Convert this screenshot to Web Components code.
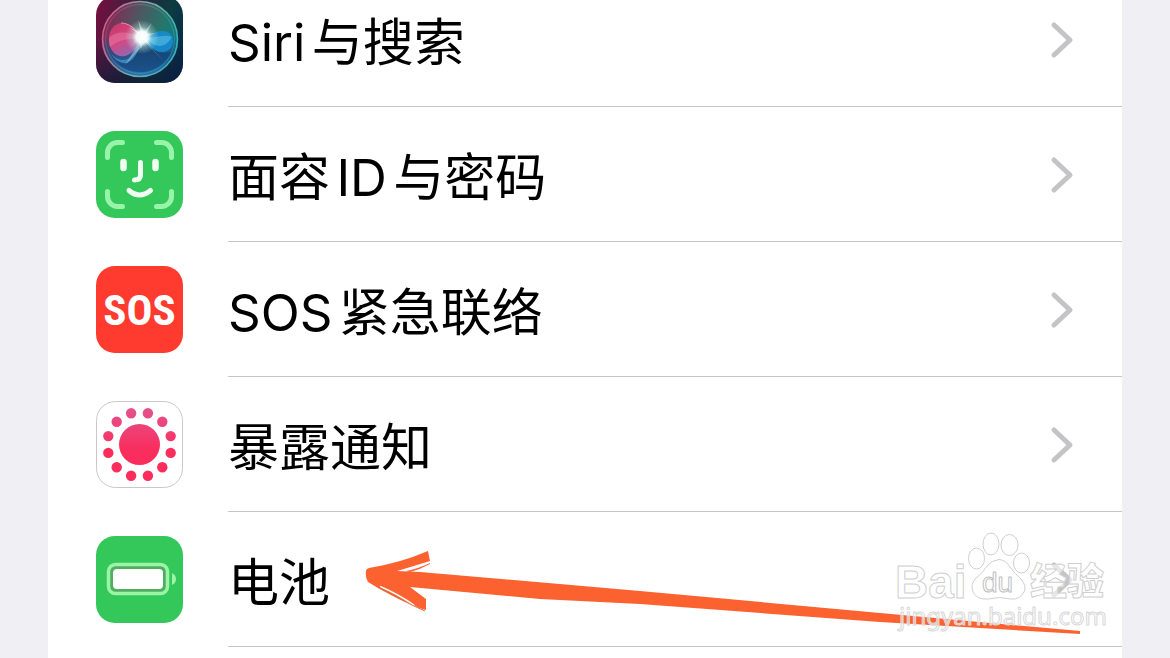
<!DOCTYPE html>
<html lang="zh-CN">
<head>
<meta charset="utf-8">
<meta name="viewport" content="width=device-width, initial-scale=1">
<title>设置</title>
<style>
  html, body {
    height: 100%;
    margin: 0;
  }

  body {
    overflow: hidden;
    background: #efeff4;
    color: #000;
    font-family: Inter, "Noto Sans CJK SC", sans-serif;
  }
</style>
</head>
<body>
<settings-list>
  <settings-row href="#siri">
    <app-icon slot="icon" name="siri"></app-icon>
    Siri与搜索
  </settings-row>
  <settings-row href="#faceid">
    <app-icon slot="icon" name="faceid"></app-icon>
    面容ID与密码
  </settings-row>
  <settings-row href="#sos">
    <app-icon slot="icon" name="sos"></app-icon>
    SOS紧急联络
  </settings-row>
  <settings-row href="#exposure">
    <app-icon slot="icon" name="exposure"></app-icon>
    暴露通知
  </settings-row>
  <settings-row href="#battery">
    <app-icon slot="icon" name="battery"></app-icon>
    电池
    <pointer-arrow slot="overlay"></pointer-arrow>
    <site-watermark slot="overlay"></site-watermark>
  </settings-row>
</settings-list>

<script>
function makeTemplate(html) {
  const template = document.createElement('template');
  template.innerHTML = html;
  return template;
}

const listTemplate = makeTemplate(`
  <style>
    :host {
      display: block;
      box-sizing: border-box;
      height: 100%;
      padding: 0 48px;
      overflow: hidden;
    }

    /* the list is scrolled a little way into its first row */
    .card {
      display: flex;
      flex-direction: column;
      min-height: 100%;
      margin-top: -28px;
      padding-bottom: 28px;
      background: #fff;
    }
  </style>
  <div class="card"><slot></slot></div>
`);

class SettingsList extends HTMLElement {
  constructor() {
    super();
    this.attachShadow({ mode: 'open' });
    this.shadowRoot.appendChild(listTemplate.content.cloneNode(true));
  }
}

const rowTemplate = makeTemplate(`
  <style>
    :host {
      display: block;
      position: relative;
    }

    a {
      display: flex;
      align-items: stretch;
      gap: 45px;
      padding-left: 48px;
      color: inherit;
      text-decoration: none;
    }

    .icon {
      display: flex;
      align-items: center;
    }

    .body {
      display: flex;
      flex: 1;
      align-items: center;
      justify-content: space-between;
      padding: 24px 48px 23px 0;
      border-bottom: 1px solid #c6c6c8;
    }

    .label {
      padding-top: 7px;
      font-size: 51px;
      line-height: 80px;
      white-space: nowrap;
      text-autospace: normal;
    }

    .chevron {
      width: 24px;
      height: 40px;
      fill: none;
      stroke: #c4c4c6;
      stroke-width: 5;
      stroke-linecap: round;
      stroke-linejoin: round;
    }
  </style>
  <a>
    <span class="icon"><slot name="icon"></slot></span>
    <span class="body">
      <span class="label"><slot></slot></span>
      <svg class="chevron" viewBox="0 0 24 40" aria-hidden="true"><path d="M4 5l16 15L4 35"/></svg>
    </span>
  </a>
  <slot name="overlay"></slot>
`);

class SettingsRow extends HTMLElement {
  constructor() {
    super();
    this.attachShadow({ mode: 'open' });
    this.shadowRoot.appendChild(rowTemplate.content.cloneNode(true));
    this.$link = this.shadowRoot.querySelector('a');
  }

  connectedCallback() {
    this.$link.href = this.getAttribute('href');
  }
}

// twelve dots round the centre, first pair either side of the top
function dots() {
  let out = '';
  for (let i = 0; i < 12; i++) {
    const angle = (i * 30 - 75) * Math.PI / 180;
    const x = (43.5 + 32.3 * Math.cos(angle)).toFixed(1);
    const y = (43.5 + 32.3 * Math.sin(angle)).toFixed(1);
    out += `<circle cx="${x}" cy="${y}" r="5.2"/>`;
  }
  return out;
}

const icons = {
  siri: `
    <defs>
      <linearGradient id="base" x1="0" y1="0.3" x2="1" y2="0.6">
        <stop offset="0" stop-color="#70103f"/>
        <stop offset="0.45" stop-color="#26283f"/>
        <stop offset="0.75" stop-color="#0c3b40"/>
        <stop offset="1" stop-color="#082c4a"/>
      </linearGradient>
      <linearGradient id="shade" x1="0" y1="0" x2="0" y2="1">
        <stop offset="0.5" stop-color="#101535" stop-opacity="0"/>
        <stop offset="1" stop-color="#101535" stop-opacity="0.6"/>
      </linearGradient>
      <linearGradient id="orb" x1="0" y1="0.3" x2="1" y2="0.7">
        <stop offset="0" stop-color="#8c2454"/>
        <stop offset="0.4" stop-color="#4a5a62"/>
        <stop offset="0.7" stop-color="#24776b"/>
        <stop offset="1" stop-color="#0f7a8e"/>
      </linearGradient>
      <linearGradient id="sea" x1="0" y1="0" x2="0" y2="1">
        <stop offset="0.45" stop-color="#174a8c" stop-opacity="0"/>
        <stop offset="0.7" stop-color="#1c4f8f" stop-opacity="0.75"/>
        <stop offset="1" stop-color="#2276b8" stop-opacity="0.95"/>
      </linearGradient>
      <linearGradient id="ring" x1="0" y1="0.3" x2="1" y2="0.6">
        <stop offset="0" stop-color="#e0618f"/>
        <stop offset="0.5" stop-color="#88b4ac"/>
        <stop offset="1" stop-color="#38bfc0"/>
      </linearGradient>
      <linearGradient id="pink" x1="0" y1="0" x2="0.5" y2="1">
        <stop offset="0" stop-color="#cc3566"/>
        <stop offset="0.6" stop-color="#d84a86"/>
        <stop offset="1" stop-color="#9a67b0"/>
      </linearGradient>
      <radialGradient id="glow">
        <stop offset="0" stop-color="#fff"/>
        <stop offset="0.35" stop-color="#f4ffff" stop-opacity="0.95"/>
        <stop offset="0.6" stop-color="#c8f2ea" stop-opacity="0.4"/>
        <stop offset="1" stop-color="#c8f2ea" stop-opacity="0"/>
      </radialGradient>
    </defs>
    <rect width="87" height="87" rx="19" fill="url(#base)"/>
    <rect width="87" height="87" rx="19" fill="url(#shade)"/>
    <circle cx="44" cy="43" r="37.500" fill="url(#orb)"/>
    <circle cx="44" cy="43" r="37.500" fill="url(#sea)"/>
    <path d="M14 56c4 9 13 10 20 6 6-4 9-13 12-20 8 11 15 17 29 14-4 10-14 18-27 20-14 1-28-5-34-20z" fill="#123468" opacity="0.45"/>
    <path d="M15 57c5 8 14 9 20 4 5-5 8-12 10-18-1 9-5 20-14 24-6 1-13-3-16-10z" fill="#48a9db" opacity="0.65"/>
    <path d="M46 42C40 31 32 27 25 27c-9 1-13 10-12 19 1 9 8 16 16 14 8-2 13-9 17-18z" fill="url(#pink)" opacity="0.95"/>
    <path d="M13 42c8-9 24-6 33 1-12-1-23 0-32 8-1-3-1-6-1-9z" fill="#ffa0bd" opacity="0.3"/>
    <path d="M25 27c8 0 15 6 21 15" fill="none" stroke="#ff9cc0" stroke-width="1" opacity="0.8"/>
    <path d="M46 42c8-3 13-7 20-7 7 0 11 4 11 10 0 7-5 11-11 11-8 0-13-8-20-14z" fill="#168cd0" opacity="0.9"/>
    <path d="M46 42c9 2 20-5 30-1-3 5-7 9-13 9-6-1-11-5-17-8z" fill="#6fd0f0" opacity="0.45"/>
    <path d="M46 42l24 25-19-19M45 43L29 69l20-22" fill="#b9cde8" opacity="0.5"/>
    <circle cx="44" cy="43" r="37.500" fill="none" stroke="url(#ring)" stroke-width="1.600" opacity="0.9"/>
    <circle cx="44" cy="43" r="34.500" fill="none" stroke="url(#ring)" stroke-width="1" opacity="0.35"/>
    <circle cx="46" cy="41" r="17" fill="url(#glow)"/>
    <path d="M46 41l-13-10 12 6-3-13 6 12 8-9-6 11 9-1-10 4 6 9-8-6-2 9-2-9-8 5z" fill="#fff" opacity="0.45"/>`,
  faceid: `
    <rect width="87" height="87" rx="19" fill="#34c759"/>
    <g fill="none" stroke-linecap="round" stroke-width="5">
      <path stroke="#99f3a9" d="M11.500 26.500v-5a10 10 0 0 1 10-10h5M60.500 11.500h5a10 10 0 0 1 10 10v5M75.500 60.500v5a10 10 0 0 1-10 10h-5M26.500 75.500h-5a10 10 0 0 1-10-10v-5"/>
      <path stroke="#effff1" stroke-width="6.500" d="M27.500 31v6M59.500 31v6"/>
      <path stroke="#effff1" d="M44.500 31.500v12.500q0 5-6 5M33 59.500q10.500 9 21.500 0"/>
    </g>`,
  sos: `
    <rect width="87" height="87" rx="19" fill="#ff3b30"/>
    <text x="43.5" y="59" text-anchor="middle" fill="#fff" font-family="'Liberation Sans Narrow', 'Roboto Condensed', 'Liberation Sans', sans-serif" font-size="43" font-weight="700">SOS</text>`,
  exposure: `
    <defs>
      <linearGradient id="rose" gradientUnits="userSpaceOnUse" x1="0" y1="10" x2="0" y2="50">
        <stop offset="0" stop-color="#e5508c"/>
        <stop offset="1" stop-color="#fa2d5c"/>
      </linearGradient>
    </defs>
    <rect x="0.5" y="0.5" width="86" height="86" rx="19" fill="#fff" stroke="#c9c9cb"/>
    <g fill="url(#rose)"><circle cx="43.5" cy="43.5" r="20.5"/>${dots()}</g>`,
  battery: `
    <rect width="87" height="87" rx="19" fill="#34c759"/>
    <rect x="12.500" y="28.500" width="59" height="29" rx="7" fill="#4fae62" stroke="#9af5a7" stroke-width="3.500"/>
    <rect x="17" y="33" width="50" height="20" rx="4" fill="#fff"/>
    <path d="M76 37q4 2 4 6t-4 6z" fill="#9af5a7"/>`,
};

class AppIcon extends HTMLElement {
  constructor() {
    super();
    this.attachShadow({ mode: 'open' });
  }

  connectedCallback() {
    this.shadowRoot.innerHTML = `
      <style>
        :host {
          display: block;
          width: 87px;
          height: 87px;
        }

        svg {
          display: block;
          width: 100%;
          height: 100%;
        }
      </style>
      <svg viewBox="0 0 87 87" aria-hidden="true">${icons[this.getAttribute('name')]}</svg>
    `;
  }
}

// hand-drawn arrow lying over the row, pointing at its label
const arrowTemplate = makeTemplate(`
  <style>
    :host {
      display: block;
      position: absolute;
      left: 316px;
      top: 36px;
      pointer-events: none;
    }

    svg {
      display: block;
      width: 720px;
      height: 90px;
    }
  </style>
  <svg viewBox="0 0 720 90" aria-hidden="true">
    <g fill="#fc6130">
      <path d="M2 23Q2 21 5 20Q36 15 64 3L66 13Q50 18 33 23L56 24L276 43L516 65L716 83V86L516 74L276 56L176 51L46 39L62 51V62Q54 60 50 57Q26 48 4 34Q1 29 2 23z"/>
      <path d="M42 23Q56 20 66 15V16Q57 21 46 24z"/>
    </g>
    <path d="M16 38.500Q32 45 50 57" fill="none" stroke="#fff" stroke-width="1.500"/>
    <path d="M15 39Q32 50 50 58L61 63" fill="none" stroke="#e0673f" stroke-width="1"/>
  </svg>
`);

class PointerArrow extends HTMLElement {
  constructor() {
    super();
    this.attachShadow({ mode: 'open' });
    this.shadowRoot.appendChild(arrowTemplate.content.cloneNode(true));
  }
}

const watermarkTemplate = makeTemplate(`
  <style>
    :host {
      display: block;
      position: absolute;
      right: 12px;
      top: 16px;
      pointer-events: none;
    }

    svg {
      display: block;
      width: 220px;
      height: 110px;
      fill: rgba(255, 255, 255, 0.6);
      stroke: #cfcfcf;
      stroke-width: 1;
      stroke-linejoin: round;
    }

    .brand {
      font: 700 46px "Liberation Sans", sans-serif;
    }

    .paw {
      font: 400 28px "Liberation Sans", sans-serif;
      stroke: #c0c0c0;
    }

    .cjk {
      font: 900 37px "Noto Sans CJK SC", sans-serif;
    }

    .site {
      font: 400 24px "Noto Sans", sans-serif;
      stroke: #d8d8d8;
    }
  </style>
  <svg viewBox="890 528 220 110">
    <text class="brand" x="895" y="598">Bai</text>
    <ellipse cx="976.500" cy="558.500" rx="8" ry="10.500"/>
    <ellipse cx="991" cy="544" rx="8" ry="11"/>
    <ellipse cx="1009.500" cy="545" rx="8.500" ry="10.500"/>
    <ellipse cx="1021.500" cy="563" rx="8" ry="10"/>
    <path d="M999 559.500Q1006 560 1010 567Q1015 574 1021 579Q1027 586 1024 592Q1020 600 1011 599Q999 596 988 599Q977 600 973 592Q970 584 976 578Q983 573 987 566Q992 560 999 559.500z"/>
    <text class="paw" x="982" y="592">du</text>
    <text class="cjk" x="1030" y="595">经验</text>
    <text class="site" x="899" y="625">jingyan.baidu.com</text>
  </svg>
`);

class SiteWatermark extends HTMLElement {
  constructor() {
    super();
    this.attachShadow({ mode: 'open' });
    this.shadowRoot.appendChild(watermarkTemplate.content.cloneNode(true));
  }
}

customElements.define('settings-list', SettingsList);
customElements.define('settings-row', SettingsRow);
customElements.define('app-icon', AppIcon);
customElements.define('pointer-arrow', PointerArrow);
customElements.define('site-watermark', SiteWatermark);
</script>
</body>
</html>
